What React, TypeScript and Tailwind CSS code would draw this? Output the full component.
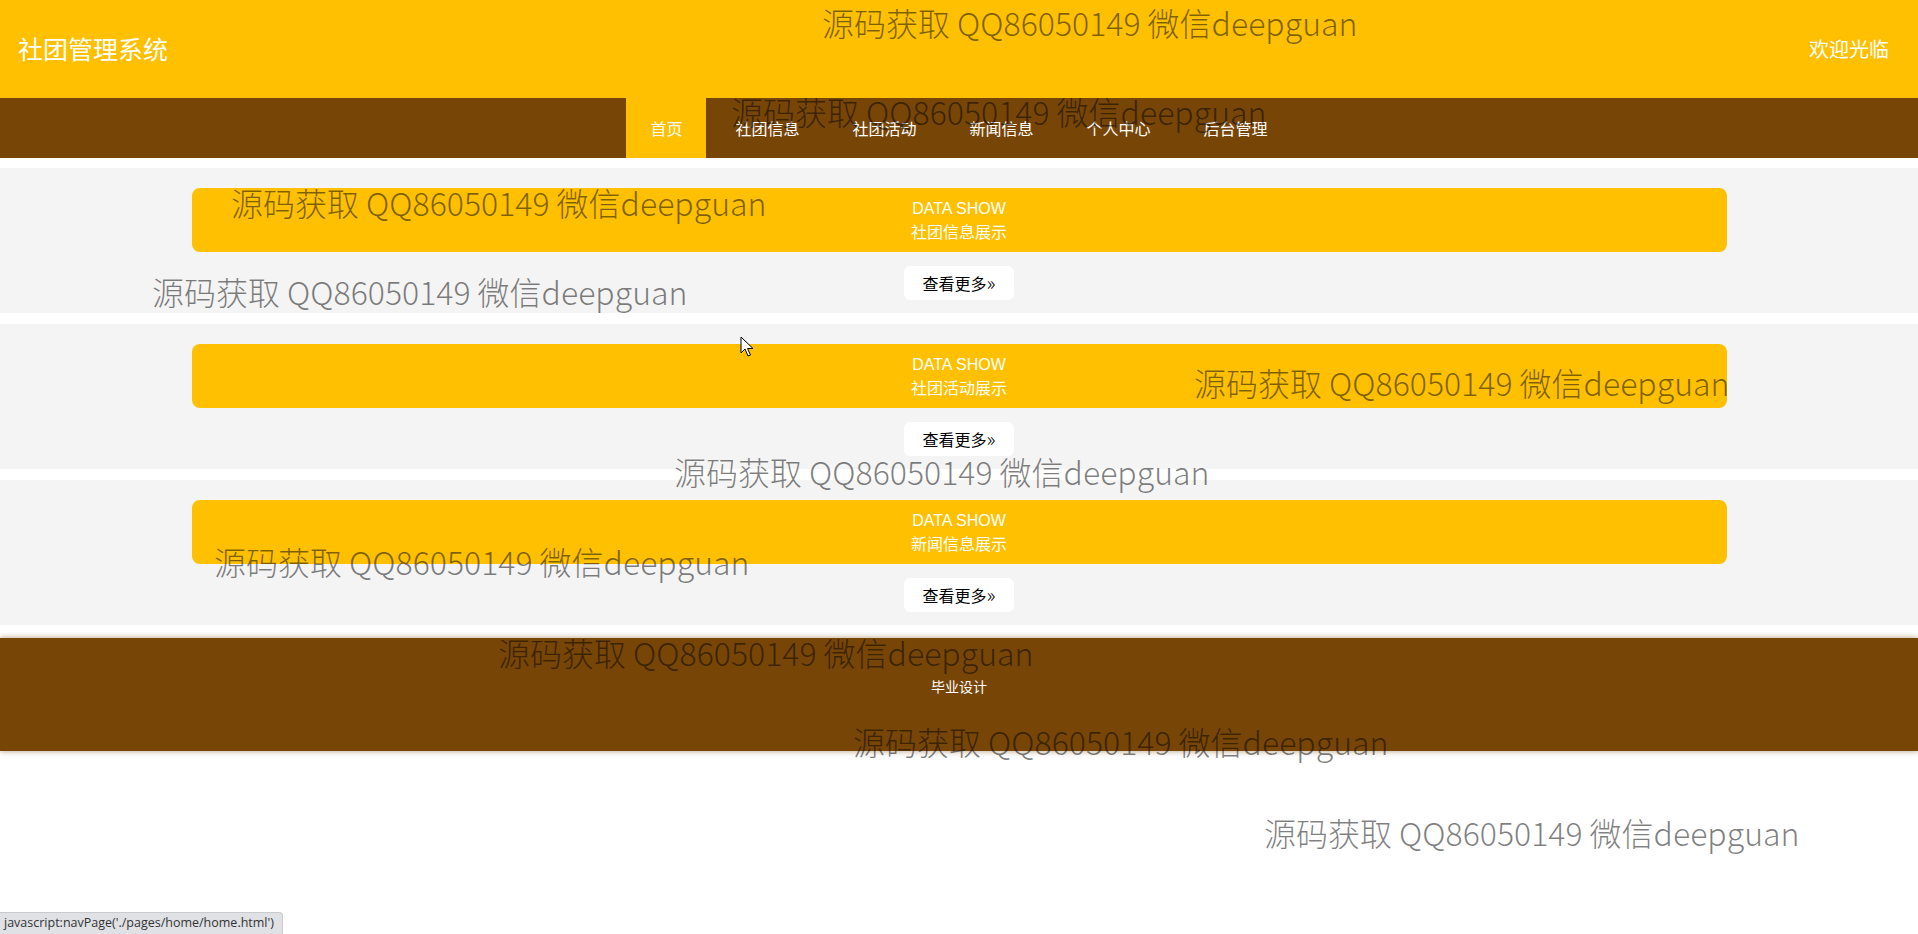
import React from 'react';

const navItems = ['首页', '社团信息', '社团活动', '新闻信息', '个人中心', '后台管理'];

const sections = ['社团信息展示', '社团活动展示', '新闻信息展示'];

// watermark overlay positions (left, top)
const marks: [number, number][] = [
  [822, 0],
  [731, 89],
  [231, 180],
  [152, 269],
  [1194, 360],
  [674, 449],
  [214, 539],
  [498, 630],
  [853, 719],
  [1264, 810],
];

const App = () => {
  return (
    <div className="relative min-h-[934px] bg-white overflow-hidden font-['Noto_Sans_CJK_SC','Noto_Sans',sans-serif]">
      {/* Top header */}
      <header className="h-[98px] bg-[#fec001] flex items-center justify-between pl-[18px] pr-[29px]">
        <h1 className="text-[25px] text-white font-normal">社团管理系统</h1>
        <span className="text-[20px] text-white">欢迎光临</span>
      </header>

      {/* Nav */}
      <nav className="h-[60px] bg-[#774607] flex justify-center gap-[5px]">
        {navItems.map((item, i) => (
          <a
            key={item}
            href="#"
            className={`h-full flex items-center px-[24px] text-[16px] text-white ${i === 0 ? 'bg-[#fec001]' : ''}`}
          >
            {item}
          </a>
        ))}
      </nav>

      <main className="pt-[10px] flex flex-col gap-[11px]">
        {sections.map((title) => (
          <section key={title} className="h-[145px] bg-[#f4f4f4] pt-[20px] flex flex-col items-center">
            <div className="w-[1535px] h-[64px] bg-[#fec001] rounded-[8px] flex flex-col items-center justify-center text-white text-[16px] leading-[22px]">
              <span className="font-['Liberation_Sans','Noto_Sans_CJK_SC',sans-serif]">DATA SHOW</span>
              <span>{title}</span>
            </div>
            <button className="mt-[14px] w-[110px] h-[34px] bg-white rounded-[6px] text-[16px] font-normal text-black flex items-center justify-center">
              查看更多<span className="text-[20px] leading-none font-light">»</span>
            </button>
          </section>
        ))}
      </main>

      {/* Footer */}
      <footer className="mt-[13px] h-[113px] bg-[#774607] shadow-[0_0_6px_rgba(119,70,7,0.55)] flex justify-center pt-[38px]">
        <span className="text-white text-[14px] h-fit">毕业设计</span>
      </footer>

      {/* Watermarks */}
      {marks.map(([x, y], i) => (
        <div
          key={i}
          className="absolute whitespace-nowrap text-[32px] leading-[44px] font-light text-black/50 pointer-events-none"
          style={{ left: x, top: y }}
        >
          源码获取 QQ86050149 微信deepguan
        </div>
      ))}

      {/* Mouse cursor */}
      <svg className="absolute left-[740px] top-[336px]" width="14" height="22" viewBox="0 0 14 22">
        <path d="M1 1 L1 17 L5 13 L8 20 L10.5 19 L7.5 12.5 L13 12.5 Z" fill="#fff" stroke="#000" strokeWidth="1" strokeLinejoin="round" />
      </svg>

      {/* Browser status bar */}
      <div className="absolute left-0 top-[912px] h-[22px] pl-[4px] pr-[8px] bg-[#dfe1e5] border-t border-r border-[#c8cacd] rounded-tr-[4px] flex items-center text-[12.5px] text-[#333] font-['Open_Sans','Noto_Sans',sans-serif]">
        javascript:navPage('./pages/home/home.html')
      </div>
    </div>
  );
};

export default App;
